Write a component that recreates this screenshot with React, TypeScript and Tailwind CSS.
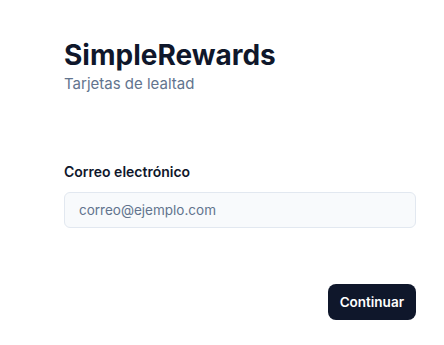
export default function App() {
  return (
    <div className="min-h-screen bg-white font-['Inter',sans-serif] pl-16 pr-7 pt-[38px]">
      <div className="flex flex-col">
        <h1 className="text-[28px] leading-[34px] font-bold text-slate-900">SimpleRewards</h1>
        <p className="text-[15px] text-slate-500 leading-6">Tarjetas de lealtad</p>

        <label className="mt-[66px] text-sm font-semibold text-slate-900 leading-5">Correo electrónico</label>
        <input
          type="email"
          placeholder="correo@ejemplo.com"
          className="mt-2.5 h-9 w-full rounded-md border border-slate-200 bg-slate-50 px-3.5 text-[13.5px] text-slate-900 placeholder:text-slate-500 outline-none"
        />

        <div className="mt-14 flex justify-end">
          <button className="h-9 rounded-lg bg-slate-900 px-3 text-[13.5px] font-semibold text-white">Continuar</button>
        </div>
      </div>
    </div>
  )
}
